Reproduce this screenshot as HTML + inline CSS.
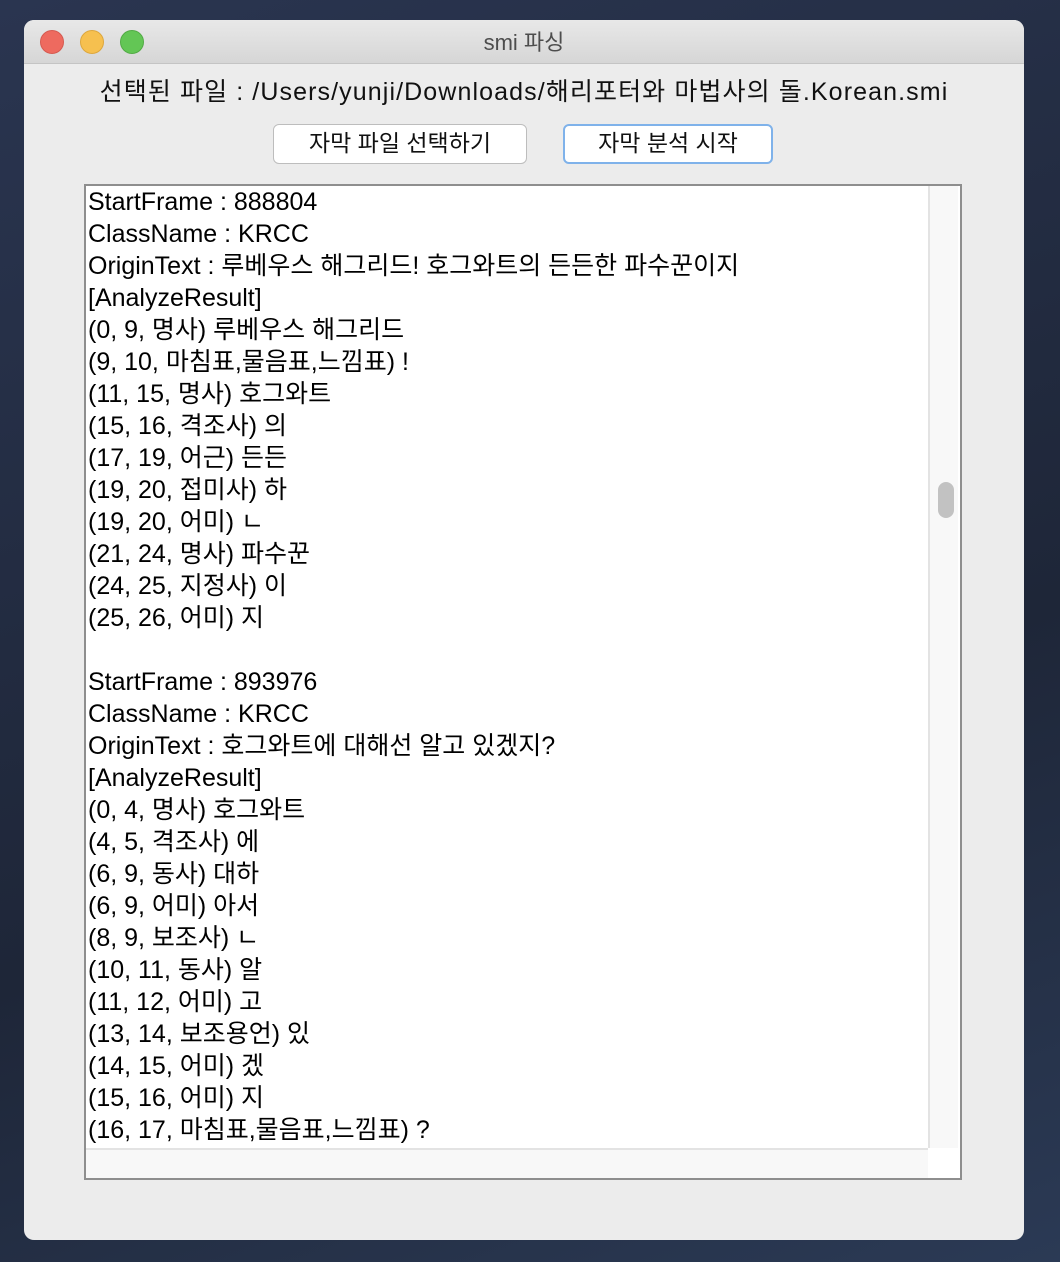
<!DOCTYPE html>
<html><head><meta charset="utf-8"><style>
*{margin:0;padding:0;box-sizing:border-box}
body{width:1060px;height:1262px;background:linear-gradient(160deg,#2a3550,#1e2638 60%,#2b3a55);position:relative;overflow:hidden;font-family:"Liberation Sans","Noto Sans CJK KR",sans-serif}
.win{position:absolute;left:24px;top:20px;width:1000px;height:1220px;background:#ececec;border-radius:10px;overflow:hidden}
.tb{height:44px;background:linear-gradient(#e8e8e8,#d6d6d6);border-bottom:1px solid #c4c4c4;position:relative}
.dot{position:absolute;top:10px;width:24px;height:24px;border-radius:50%}
.tt{position:absolute;left:0;right:0;top:5px;text-align:center;font-size:22px;color:#4d4d4d}
.path{position:absolute;top:52px;left:0;right:0;text-align:center;font-size:25px;color:#111;letter-spacing:1.1px}
.btn{position:absolute;top:104px;height:40px;background:#fff;border:1px solid #bdbdbd;border-radius:6px;font-size:23px;text-align:center;line-height:37px;color:#111}
.ta{position:absolute;left:60px;top:164px;width:878px;height:996px;border:2px solid #8e8e8e;background:#fff}
.txt{position:absolute;left:2px;top:0;font-size:25px;line-height:32px;color:#000;white-space:pre}
.vs{position:absolute;left:842px;top:0;width:30px;height:962px;background:#f8f8f8;border-left:2px solid #e3e3e3}
.th{position:absolute;left:8px;top:296px;width:16px;height:36px;border-radius:8px;background:#c2c2c2}
.hs{position:absolute;left:0;top:962px;width:842px;height:30px;background:#f8f8f8;border-top:2px solid #e3e3e3}
</style></head><body>
<div class="win">
<div class="tb">
<div class="dot" style="left:16px;background:#ee6a5f;border:1px solid #d55a50"></div>
<div class="dot" style="left:56px;background:#f6c04f;border:1px solid #dda73d"></div>
<div class="dot" style="left:96px;background:#63c655;border:1px solid #52ab45"></div>
<div class="tt">smi 파싱</div>
</div>
<div class="path">선택된 파일 : /Users/yunji/Downloads/해리포터와 마법사의 돌.Korean.smi</div>
<div class="btn" style="left:249px;width:254px">자막 파일 선택하기</div>
<div class="btn" style="left:539px;width:210px;border:2px solid #7fb2ea;line-height:35px">자막 분석 시작</div>
<div class="ta">
<div class="txt">StartFrame : 888804
ClassName : KRCC
OriginText : 루베우스 해그리드! 호그와트의 든든한 파수꾼이지
[AnalyzeResult]
(0, 9, 명사) 루베우스 해그리드
(9, 10, 마침표,물음표,느낌표) !
(11, 15, 명사) 호그와트
(15, 16, 격조사) 의
(17, 19, 어근) 든든
(19, 20, 접미사) 하
(19, 20, 어미) ㄴ
(21, 24, 명사) 파수꾼
(24, 25, 지정사) 이
(25, 26, 어미) 지

StartFrame : 893976
ClassName : KRCC
OriginText : 호그와트에 대해선 알고 있겠지?
[AnalyzeResult]
(0, 4, 명사) 호그와트
(4, 5, 격조사) 에
(6, 9, 동사) 대하
(6, 9, 어미) 아서
(8, 9, 보조사) ㄴ
(10, 11, 동사) 알
(11, 12, 어미) 고
(13, 14, 보조용언) 있
(14, 15, 어미) 겠
(15, 16, 어미) 지
(16, 17, 마침표,물음표,느낌표) ?</div>
<div class="vs"><div class="th"></div></div>
<div class="hs"></div>
</div>
</div>
</body></html>
